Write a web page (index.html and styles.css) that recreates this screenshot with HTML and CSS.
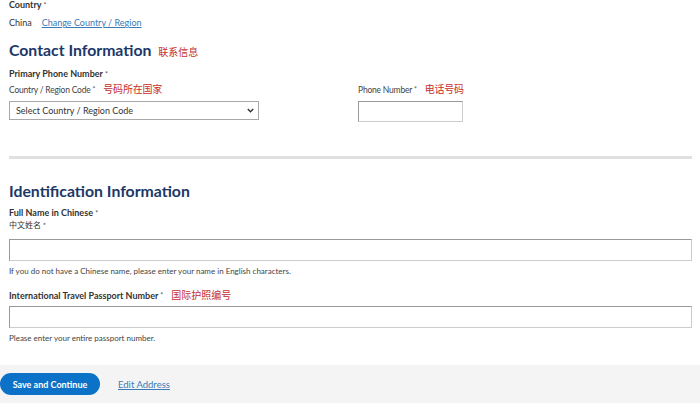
FILE: index.html
```html
<!DOCTYPE html>
<html lang="en">
<head>
<meta charset="utf-8">
<link rel="stylesheet" href="styles.css">
</head>
<body>
<div class="page">
  <div class="label-bold l-country">Country <span class="req">*</span></div>
  <div class="china-row"><span class="china">China</span><a class="link" href="#">Change Country / Region</a></div>
  <h2 class="heading h-contact">Contact Information <span class="cn-red cn-head">联系信息</span></h2>
  <div class="label-bold l-primary">Primary Phone Number <span class="req">*</span></div>
  <div class="phone-grid">
    <div class="col">
      <div class="label-sm">Country / Region Code <span class="req">*</span><span class="cn-red">号码所在国家</span></div>
      <div class="select"><span>Select Country / Region Code</span>
        <svg class="chev" width="7" height="5" viewBox="0 0 7 5"><path d="M0.8 1 L3.5 3.8 L6.2 1" fill="none" stroke="#333" stroke-width="1.4"/></svg>
      </div>
    </div>
    <div class="col">
      <div class="label-sm">Phone Number <span class="req">*</span><span class="cn-red">电话号码</span></div>
      <div class="input input-phone"></div>
    </div>
  </div>
  <div class="divider"></div>
  <h2 class="heading h-ident">Identification Information</h2>
  <div class="label-bold l-full">Full Name in Chinese <span class="req">*</span></div>
  <div class="label-cn">中文姓名 <span class="req">*</span></div>
  <div class="input input-wide in-name"></div>
  <div class="help h1">If you do not have a Chinese name, please enter your name in English characters.</div>
  <div class="label-bold l-pass">International Travel Passport Number <span class="req">*</span><span class="cn-red">国际护照编号</span></div>
  <div class="input input-wide in-pass"></div>
  <div class="help h2">Please enter your entire passport number.</div>
</div>
<div class="footer">
  <button class="btn">Save and Continue</button>
  <a class="link edit" href="#">Edit Address</a>
</div>
</body>
</html>
```

FILE: styles.css
```css
html, body { margin: 0; padding: 0; background: #fff; }
body { font-family: Lato, "Noto Sans CJK SC", sans-serif; color: #333; width: 700px; height: 403px; overflow: hidden; }
.page { padding: 0 8px 0 9px; }
.label-bold { font-weight: 700; font-size: 9px; line-height: 10px; color: #333; }
.req { color: #555; font-weight: 400; font-size: 7px; vertical-align: top; }
.l-country { margin-top: 0; }
.china-row { margin-top: 8px; font-size: 9px; line-height: 10px; }
.china { color: #333; margin-right: 10px; }
.link { color: #3b7bb5; text-decoration: underline; }
.heading { margin: 0; font-weight: 700; color: #1c3867; line-height: 20px; font-size: 15.8px; }
.h-contact { margin-top: 12px; }
.cn-red { color: #c4302b; font-family: "Noto Sans CJK SC", sans-serif; font-weight: 400; font-size: 10px; margin-left: 8px; }
.cn-head { font-size: 10px; margin-left: 3px; }
.l-primary { margin-top: 7px; }
.phone-grid { display: grid; grid-template-columns: 349px 1fr; margin-top: 5px; }
.label-sm { font-size: 8.5px; line-height: 10px; color: #444; letter-spacing: -0.2px; }
.select { margin-top: 6px; width: 250px; height: 19px; box-sizing: border-box; border: 1px solid #a9a9a9; display: flex; align-items: center; justify-content: space-between; padding: 0 4px 0 6px; font-size: 9px; color: #333; }
.input { box-sizing: border-box; border: 1px solid #999; border-bottom-color: #ccc; border-right-color: #ccc; background: #fff; }
.input-phone { margin-top: 6px; width: 105px; height: 21px; }
.divider { margin-top: 34px; height: 3px; width: 683px; background: #e0e0e0; }
.h-ident { margin-top: 22px; }
.l-full { margin-top: 7px; }
.label-cn { margin-top: 2px; font-size: 8px; line-height: 10px; font-family: "Noto Sans CJK SC", sans-serif; color: #333; }
.input-wide { width: 683px; height: 22px; }
.in-name { margin-top: 9px; }
.help { font-size: 8px; line-height: 10px; color: #444; }
.h1 { margin-top: 5px; }
.l-pass { margin-top: 14px; }
.in-pass { margin-top: 5px; }
.h2 { margin-top: 5px; }
.footer { margin-top: 22px; height: 38px; background: #f4f4f4; display: flex; align-items: center; gap: 18px; }
.btn { width: 100px; height: 22px; border: 0; border-radius: 11px; background: #0b72c8; color: #fff; font-family: Lato, sans-serif; font-weight: 700; font-size: 9px; padding: 0; }
.edit { font-size: 9.5px; }
```
